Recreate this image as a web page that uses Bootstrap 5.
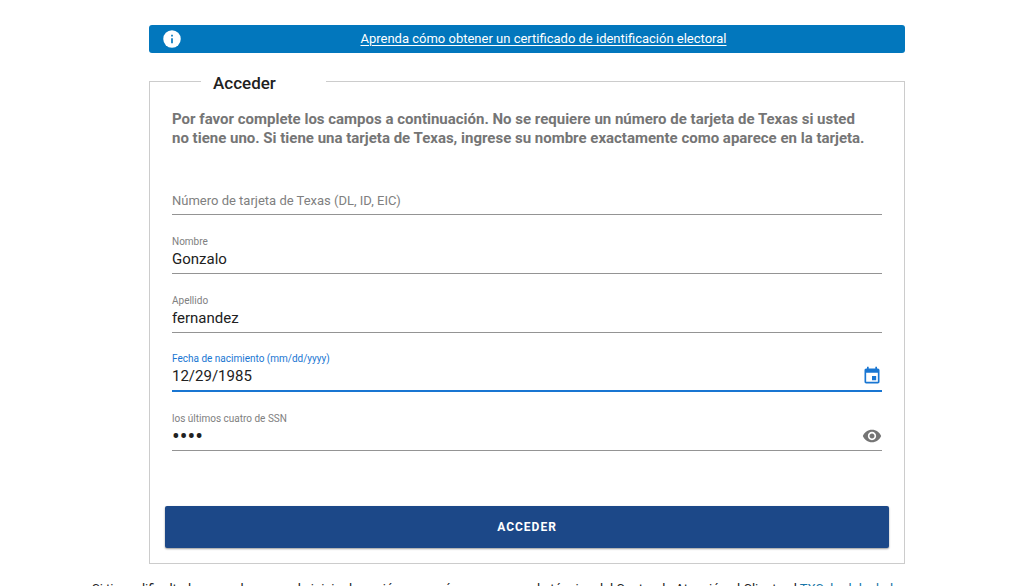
<!DOCTYPE html>
<html lang="es">
<head>
<meta charset="utf-8">
<meta name="viewport" content="width=device-width, initial-scale=1">
<title>Acceder</title>
<link href="https://cdn.jsdelivr.net/npm/bootstrap@5.3.0/dist/css/bootstrap.min.css" rel="stylesheet">
<style>
body{font-family:Roboto,"Liberation Sans",sans-serif;background:#fff;color:#212121;overflow:hidden}
.page-wrap{padding:25px 0 0 30px}
.page-main{max-width:756px;margin:0 auto}
.notice{background:#0277bd;border-radius:3px;min-height:28px;padding:0 0 0 13px;font-size:13px;line-height:20px}
.notice svg{width:20px;height:20px;flex:none}
.notice a{color:#fff;text-underline-offset:2px}
.panel{border:1px solid #ccc;margin-top:13px;padding:0 15px 15px}
.panel legend{float:none;width:125px;margin:0 0 0 36px;padding:4px 12px 0;font-size:17px;line-height:26px;font-weight:500}
.intro{color:#757575;font-size:15px;line-height:19px;font-weight:700;margin:14px 0 8px}
.fields{padding:0 7px}
.fld{border-bottom:1px solid #949494;height:59px;padding-bottom:4px;display:flex;flex-direction:column;justify-content:flex-end}
.fld label{font-size:10px;line-height:14px;color:#808080}
.fld input{border:0;outline:0;background:none;padding:0;width:100%;min-width:0;font-size:15px;line-height:20px;height:20px;color:#212121}
.fld input::placeholder{color:#808080;opacity:1;font-size:13px}
.fld input[type=password]{font-size:23px}
.fld.picked{border-bottom:2px solid #1976d2}
.fld.picked label{color:#1976d2}
.fld button{border:0;background:none;padding:0;color:#757575;height:20px;line-height:0}
.fld.picked button{color:#1976d2}
.fld svg{width:20px;height:20px}
.submit{background:#1c4888;color:#fff;border-radius:2px;height:42px;margin-top:55px;font-size:12px;font-weight:700;letter-spacing:1px;box-shadow:0 1px 2px #0006}
.submit:hover{background:#1c4888;color:#fff}
.help{font-size:13px;line-height:20px;margin:15px 0 0 62px;white-space:nowrap}
.help a{color:#1976a8;text-decoration:none}
</style>
</head>
<body>
<div class="page-wrap">
<main class="page-main">
  <div class="notice d-flex align-items-center">
    <svg viewBox="0 0 24 24" aria-hidden="true"><circle cx="12" cy="12" r="10.5" fill="#fff"/><path d="M11 7h2v2h-2zM11 11h2v6h-2z" fill="#0277bd"/></svg>
    <div class="flex-grow-1 text-center"><a href="#">Aprenda cómo obtener un certificado de identificación electoral</a></div>
  </div>
  <form>
    <fieldset class="panel">
      <legend>Acceder</legend>
      <div class="fields">
        <p class="intro">Por favor complete los campos a continuación. No se requiere un número de tarjeta de Texas si usted<br>no tiene uno. Si tiene una tarjeta de Texas, ingrese su nombre exactamente como aparece en la tarjeta.</p>
        <div class="fld"><label for="card" class="visually-hidden">Número de tarjeta de Texas (DL, ID, EIC)</label><input id="card" placeholder="Número de tarjeta de Texas (DL, ID, EIC)"></div>
        <div class="fld"><label for="first">Nombre</label><input id="first" value="Gonzalo"></div>
        <div class="fld"><label for="last">Apellido</label><input id="last" value="fernandez"></div>
        <div class="fld picked"><label for="birth">Fecha de nacimiento (mm/dd/yyyy)</label>
          <div class="d-flex"><input id="birth" value="12/29/1985"><button type="button" aria-label="Calendario"><svg viewBox="0 0 24 24" fill="currentColor"><path d="M17 12h-5v5h5v-5zM16 1v2H8V1H6v2H5c-1.11 0-2 .9-2 2v14c0 1.1.89 2 2 2h14c1.1 0 2-.9 2-2V5c0-1.1-.9-2-2-2h-1V1h-2zm3 18H5V8h14v11z"/></svg></button></div></div>
        <div class="fld"><label for="ssn">los últimos cuatro de SSN</label>
          <div class="d-flex"><input id="ssn" type="password" value="1234"><button type="button" aria-label="Mostrar"><svg viewBox="0 0 24 24" fill="currentColor"><path d="M12 4.500C7 4.500 2.730 7.610 1 12c1.730 4.390 6 7.500 11 7.500s9.270-3.110 11-7.500c-1.730-4.390-6-7.500-11-7.500zM12 17c-2.760 0-5-2.240-5-5s2.240-5 5-5 5 2.240 5 5-2.240 5-5 5zm0-8c-1.660 0-3 1.340-3 3s1.340 3 3 3 3-1.340 3-3-1.340-3-3-3z"/></svg></button></div></div>
      </div>
      <button class="submit btn w-100 d-block" type="submit">ACCEDER</button>
    </fieldset>
  </form>
</main>
<p class="help">Si tiene dificultades cuando no puede iniciar la sesión, comuníquese con ayuda técnica del Centro de Atención al Cliente al <a href="#">TXScheduler.help</a></p>
</div>
<script src="https://cdn.jsdelivr.net/npm/bootstrap@5.3.0/dist/js/bootstrap.bundle.min.js"></script>
</body>
</html>
